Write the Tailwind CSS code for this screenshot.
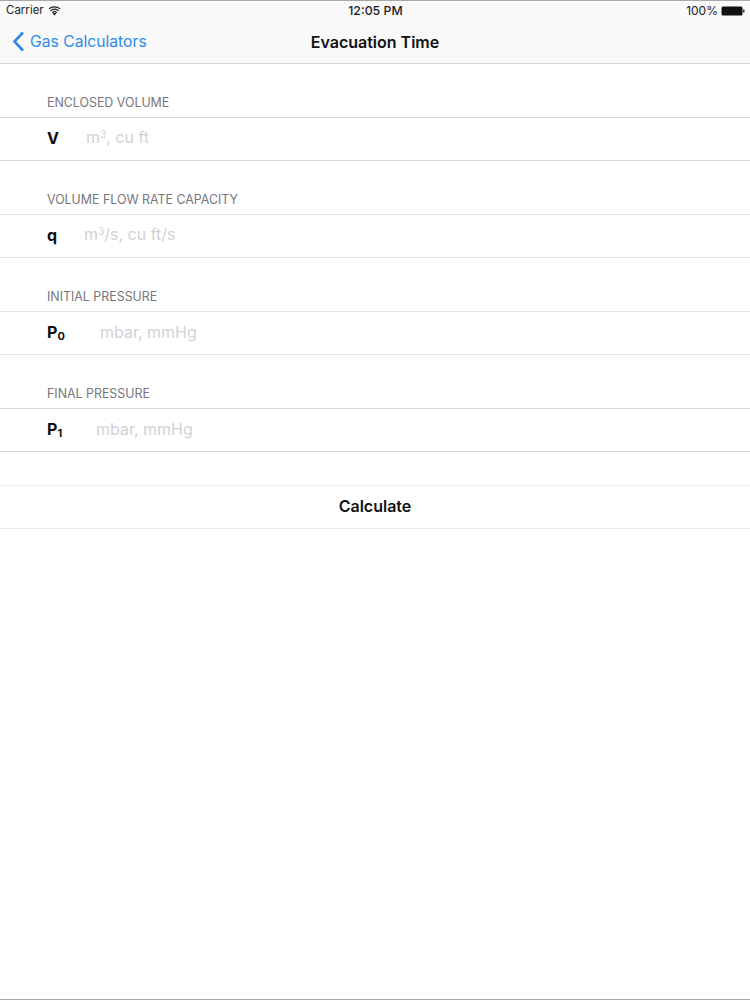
<!DOCTYPE html>
<html lang="en">
<head>
    <meta charset="UTF-8">
    <meta name="viewport" content="width=device-width, initial-scale=1.0">
    <title>Evacuation Time</title>
    <script src="https://cdn.jsdelivr.net/npm/@tailwindcss/browser@4"></script>
</head>
<body class="bg-white font-['Inter',sans-serif] text-[#111]">
    <div class="flex flex-col h-[1000px] overflow-hidden border-t border-b border-t-[#a8a8a8] border-b-[#a8a8a8]">
        <!-- nav bar -->
        <div class="h-[63px] shrink-0 bg-[#f9f9fa] border-b border-[#d6d6d8] relative">
            <div class="flex items-center justify-between h-[20px] pl-[6px] pr-[5px] text-[11.5px] text-[#222]">
                <div class="flex items-center gap-[4px]">
                    <span>Carrier</span>
                    <svg width="13" height="10" viewBox="0 0 13 10" fill="#222">
                        <path d="M6.5 9.6 4.7 7.4a2.8 2.8 0 0 1 3.6 0Z"/>
                        <path d="M3.7 6.2a4.4 4.4 0 0 1 5.6 0l-.7.9a3.3 3.3 0 0 0-4.2 0Z"/>
                        <path d="M2.1 4.3a6.9 6.9 0 0 1 8.8 0l-.7.9a5.8 5.8 0 0 0-7.4 0Z"/>
                        <path d="M.5 2.4a9.4 9.4 0 0 1 12 0l-.7.9a8.3 8.3 0 0 0-10.6 0Z"/>
                    </svg>
                </div>
                <span class="font-medium text-[12.3px] ml-[4px]">12:05 PM</span>
                <div class="flex items-center gap-[3px]">
                    <span class="text-[12px]">100%</span>
                    <svg width="24" height="10" viewBox="0 0 24 10">
                        <rect x="0.5" y="0.5" width="21" height="9" rx="1.5" fill="#111"/>
                        <rect x="22" y="3.5" width="1.5" height="3" fill="#333"/>
                    </svg>
                </div>
            </div>
            <div class="flex items-center justify-between h-[41px] relative">
                <div class="flex items-center gap-[5px] pl-[12px] text-[#2f8be6] text-[15.7px]">
                    <svg width="13" height="21" viewBox="0 0 13 21" fill="none" stroke="#2f8be6" stroke-width="2.6">
                        <path d="M11 1.5 2.5 10.5 11 19.5"/>
                    </svg>
                    <span>Gas Calculators</span>
                </div>
                <span class="absolute left-0 right-0 text-center text-[16px] font-semibold">Evacuation Time</span>
            </div>
        </div>

        <!-- enclosed volume -->
        <div class="h-[53px] shrink-0 flex items-end pb-[4px] pl-[47px] text-[12.4px] text-[#77777b]">ENCLOSED VOLUME</div>
        <div class="h-[44px] shrink-0 flex items-center pb-[3px] border-t border-b border-[#d8d8db]">
            <span class="w-[39px] ml-[47px] text-[16px] font-bold">V</span>
            <span class="mb-[2px] text-[16px] text-[#d2d2d5]">m<sup class="text-[10px]">3</sup>, cu ft</span>
        </div>

        <!-- flow rate -->
        <div class="h-[53px] shrink-0 flex items-end pb-[4px] pl-[47px] text-[12.4px] text-[#77777b]">VOLUME FLOW RATE CAPACITY</div>
        <div class="h-[44px] shrink-0 flex items-center pb-[3px] border-t border-b border-[#e6e6e8]">
            <span class="w-[37px] ml-[47px] text-[16px] font-bold">q</span>
            <span class="mb-[2px] text-[16px] text-[#d2d2d5]">m<sup class="text-[10px]">3</sup>/s, cu ft/s</span>
        </div>

        <!-- initial pressure -->
        <div class="h-[53px] shrink-0 flex items-end pb-[4px] pl-[47px] text-[12.4px] text-[#77777b]">INITIAL PRESSURE</div>
        <div class="h-[44px] shrink-0 flex items-center pb-[3px] border-t border-b border-[#e6e6e8]">
            <span class="w-[53px] ml-[47px] text-[16px] font-bold">P<sub class="text-[11px]">0</sub></span>
            <span class="text-[16px] text-[#d2d2d5]">mbar, mmHg</span>
        </div>

        <!-- final pressure -->
        <div class="h-[53px] shrink-0 flex items-end pb-[4px] pl-[47px] text-[12.4px] text-[#77777b]">FINAL PRESSURE</div>
        <div class="h-[44px] shrink-0 flex items-center pb-[3px] border-t border-b border-[#d8d8db]">
            <span class="w-[49px] ml-[47px] text-[16px] font-bold">P<sub class="text-[11px]">1</sub></span>
            <span class="text-[16px] text-[#d2d2d5]">mbar, mmHg</span>
        </div>

        <div class="h-[33px] shrink-0"></div>
        <div class="h-[44px] shrink-0 flex items-center justify-center pb-[2px] border-t border-b border-[#ebebed] text-[16px] font-semibold">Calculate</div>
    </div>
</body>
</html>
